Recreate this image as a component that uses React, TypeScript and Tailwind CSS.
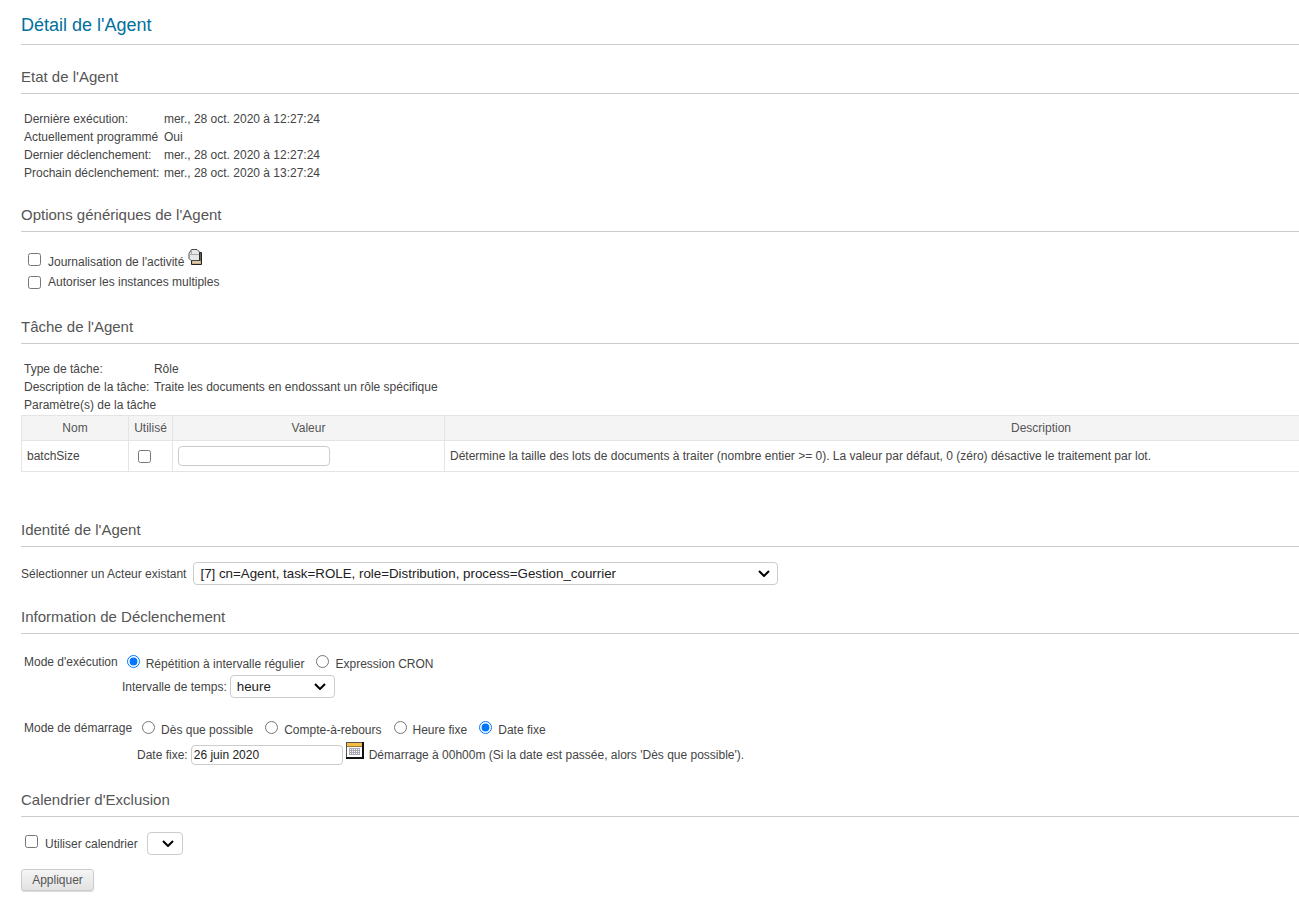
import type { ReactNode } from "react";

const font = "font-['Liberation_Sans',Arial,sans-serif]";

function SectionTitle({ children, className = "" }: { children: ReactNode; className?: string }) {
  return (
    <h2 className={`text-[15px] leading-[18px] text-[#555] pb-[7px] border-b border-[#ccc] ${className}`}>
      {children}
    </h2>
  );
}

function Check({ className = "" }: { className?: string }) {
  return <input type="checkbox" className={`w-[13px] h-[13px] shrink-0 ${className}`} />;
}

function Radio({ label, name, checked = false }: { label: string; name: string; checked?: boolean }) {
  return (
    <label className="flex items-start">
      <input type="radio" name={name} defaultChecked={checked} className="w-[13px] h-[13px] mt-[2px]" />
      <span className="ml-[6px] mt-[2px] mr-[12px] leading-[18px]">{label}</span>
    </label>
  );
}

function Select({ className, right, children }: { className: string; right: string; children?: ReactNode }) {
  return (
    <div className={`relative h-[23px] ${className}`}>
      <select className="appearance-none block w-full h-full border border-[#ccc] rounded-[4px] pl-[6px] text-[13.33px] text-[#222]">
        {children}
      </select>
      <svg width="12" height="7" viewBox="0 0 12 7" className={`absolute top-[8px] pointer-events-none ${right}`}>
        <path d="M1 1 L6 6 L11 1" fill="none" stroke="#000" strokeWidth="2" />
      </svg>
    </div>
  );
}

function DocIcon() {
  return (
    <svg width="15" height="17" viewBox="0 0 15 17" className="ml-[4px] -mt-[1px]">
      <path d="M3.5 3.5 H13.5 V15.5 H3.5 Z" fill="#c8b28a" stroke="#222" />
      <rect x="5" y="12" width="7" height="2" fill="#dccaa8" />
      <path d="M1 4.5 L3.5 0.5 H9 L11.5 3 V11.5 H3 L1 9.5 Z" fill="#e8e8e8" stroke="#4a4a4a" />
      <path d="M3.5 1 V5.5 H1.5 M3.5 5.5 H11" fill="none" stroke="#aaa" />
      <path d="M12 3.5 V12" stroke="#111" />
    </svg>
  );
}

function CalendarIcon() {
  return (
    <svg width="18" height="17" viewBox="0 0 18 17" className="ml-[3px] mr-[5px] -mt-[10px]">
      <rect x="0.5" y="0.5" width="16" height="15" fill="#fff" stroke="#555" />
      <rect x="1" y="1" width="15" height="3" fill="#f6bd45" />
      <path d="M1 4.5 H16" stroke="#9c7a30" />
      <path d="M3 6.5 H14 M3 8.5 H14 M3 10.5 H14 M3 12.5 H14 M3.5 6 V13 M5.5 6 V13 M7.5 6 V13 M9.5 6 V13 M11.5 6 V13 M13.5 6 V13" stroke="#a8a8b4" />
      <path d="M0 16 H18 M17 0 V17" stroke="#111" strokeWidth="2" />
    </svg>
  );
}

const rows1 = [
  ["Dernière exécution:", "mer., 28 oct. 2020 à 12:27:24"],
  ["Actuellement programmé", "Oui"],
  ["Dernier déclenchement:", "mer., 28 oct. 2020 à 12:27:24"],
  ["Prochain déclenchement:", "mer., 28 oct. 2020 à 13:27:24"],
];

const rows2 = [
  ["Type de tâche:", "Rôle"],
  ["Description de la tâche:", "Traite les documents en endossant un rôle spécifique"],
];

function KeyValues({ rows, footer }: { rows: string[][]; footer?: string }) {
  return (
    <div className="grid grid-cols-[max-content_max-content] gap-x-[4.5px] ml-[3px] leading-[18px]">
      {rows.map(([k, v]) => (
        <div key={k} className="contents">
          <span>{k}</span>
          <span>{v}</span>
        </div>
      ))}
      {footer && <span className="col-span-2">{footer}</span>}
    </div>
  );
}

export default function App() {
  return (
    <div className={`${font} h-[901px] overflow-hidden bg-white pl-[21px] text-[12px] text-[#444]`}>
      <h1 className="text-[18px] leading-[20px] text-[#00709c] pt-[15px] pb-[9px] border-b border-[#ccc]">
        Détail de l'Agent
      </h1>

      <SectionTitle className="mt-[23px]">Etat de l'Agent</SectionTitle>
      <div className="mt-[16px]">
        <KeyValues rows={rows1} />
      </div>

      <SectionTitle className="mt-[24px]">Options génériques de l'Agent</SectionTitle>
      <div className="ml-[7px] mt-[18px] flex items-start">
        <Check className="mt-[3px]" />
        <span className="ml-[7px] mt-[3px]">Journalisation de l'activité</span>
        <DocIcon />
      </div>
      <div className="ml-[7px] mt-[2px] flex items-center leading-[18px]">
        <Check />
        <span className="ml-[7px]">Autoriser les instances multiples</span>
      </div>

      <SectionTitle className="mt-[27px]">Tâche de l'Agent</SectionTitle>
      <div className="mt-[16px]">
        <KeyValues rows={rows2} footer="Paramètre(s) de la tâche" />
      </div>
      <table className="w-[1617px] table-fixed border-collapse mt-[1px] border border-[#e4e4e4]">
        <colgroup>
          <col className="w-[107px]" />
          <col className="w-[44px]" />
          <col className="w-[272px]" />
          <col />
        </colgroup>
        <thead className="text-[#555]">
          <tr className="h-[25px] bg-[#f4f4f4]">
            <th className="font-normal border border-[#e4e4e4]">Nom</th>
            <th className="font-normal border border-[#e4e4e4]">Utilisé</th>
            <th className="font-normal border border-[#e4e4e4]">Valeur</th>
            <th className="font-normal border border-[#e4e4e4]">Description</th>
          </tr>
        </thead>
        <tbody>
          <tr className="h-[31px]">
            <td className="border border-[#e4e4e4] px-[5px]">batchSize</td>
            <td className="border border-[#e4e4e4] pl-[9px]">
              <Check className="block" />
            </td>
            <td className="border border-[#e4e4e4] px-[5px]">
              <input type="text" className="block w-[152px] h-[20px] border border-[#ccc] rounded-[4px]" />
            </td>
            <td className="border border-[#e4e4e4] px-[5px]">
              Détermine la taille des lots de documents à traiter (nombre entier &gt;= 0). La valeur par défaut, 0 (zéro) désactive le traitement par lot.
            </td>
          </tr>
        </tbody>
      </table>

      <SectionTitle className="mt-[49px]">Identité de l'Agent</SectionTitle>
      <div className="mt-[15px] flex items-center">
        <span>Sélectionner un Acteur existant</span>
        <Select className="ml-[7px] w-[585px]" right="right-[8px]">
          <option>[7] cn=Agent, task=ROLE, role=Distribution, process=Gestion_courrier</option>
        </Select>
      </div>

      <SectionTitle className="mt-[23px]">Information de Déclenchement</SectionTitle>
      <div className="mt-[19px] ml-[3px] flex items-start">
        <span className="mr-[9px] leading-[18px]">Mode d'exécution</span>
        <Radio name="mode" label="Répétition à intervalle régulier" checked />
        <Radio name="mode" label="Expression CRON" />
      </div>
      <div className="mt-[2px] ml-[101px] flex items-center">
        <span>Intervalle de temps:</span>
        <Select className="ml-[3px] w-[105px]" right="right-[9px]">
          <option>heure</option>
        </Select>
      </div>
      <div className="mt-[21px] ml-[3px] flex items-start">
        <span className="mr-[10px] leading-[18px]">Mode de démarrage</span>
        <Radio name="start" label="Dès que possible" />
        <Radio name="start" label="Compte-à-rebours" />
        <Radio name="start" label="Heure fixe" />
        <Radio name="start" label="Date fixe" checked />
      </div>
      <div className="mt-[6px] ml-[116px] flex items-center">
        <span>Date fixe:</span>
        <input
          type="text"
          defaultValue="26 juin 2020"
          className="ml-[3px] w-[152px] h-[20px] border border-[#ccc] rounded-[4px] pl-[2px] text-[#222]"
        />
        <CalendarIcon />
        <span>Démarrage à 00h00m (Si la date est passée, alors 'Dès que possible').</span>
      </div>

      <SectionTitle className="mt-[26px]">Calendrier d'Exclusion</SectionTitle>
      <div className="mt-[15px] ml-[4px] flex items-center">
        <Check className="-mt-[5px]" />
        <span className="ml-[7px]">Utiliser calendrier</span>
        <Select className="ml-[9px] w-[36px]" right="right-[9px]" />
      </div>
      <button className="block mt-[14px] w-[73px] h-[22px] rounded-[3px] border border-[#ccc] text-[#555] bg-gradient-to-b from-[#f5f5f5] to-[#e2e2e2] shadow-[0_1px_1px_rgba(0,0,0,0.15)]">
        Appliquer
      </button>
    </div>
  );
}
